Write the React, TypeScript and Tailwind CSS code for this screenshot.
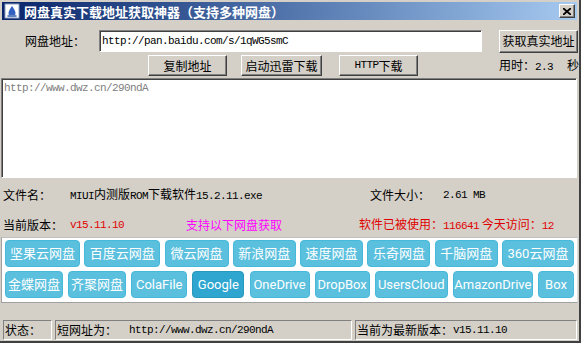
import React from "react";

const CJK = '"Noto Sans CJK SC", "Noto Sans", sans-serif';

const M = ({ children, className = "" }: { children: React.ReactNode; className?: string }) => (
  <span className={"font-['Liberation_Mono',monospace] text-[11px] tracking-[-0.6px] " + className}>{children}</span>
);

const raised =
  "border border-t-white border-l-white border-r-[#404040] border-b-[#404040] shadow-[inset_-1px_-1px_0_#808080] bg-[#d4d0c8] flex items-center justify-center";
const sunken =
  "border border-t-[#808080] border-l-[#808080] border-r-white border-b-white shadow-[inset_1px_1px_0_#404040]";
const panel = "border border-t-[#808080] border-l-[#808080] border-r-white border-b-white";

const row1 = [
  ["坚果云网盘", 75],
  ["百度云网盘", 76],
  ["微云网盘", 64],
  ["新浪网盘", 63],
  ["速度网盘", 63],
  ["乐奇网盘", 63],
  ["千脑网盘", 63],
  ["360云网盘", 72],
] as const;
const row2 = [
  ["金蝶网盘", 58],
  ["齐聚网盘", 58],
  ["ColaFile", 56],
  ["Google", 52],
  ["OneDrive", 60],
  ["DropBox", 55],
  ["UsersCloud", 73],
  ["AmazonDrive", 80],
  ["Box", 36],
] as const;

function Pill({ label, w, active }: { label: string; w: number; active?: boolean }) {
  return (
    <div
      style={{ width: w }}
      className={
        "h-[27px] rounded-[4px] border flex items-center justify-center text-white text-[13px] font-['Roboto','Noto_Sans_CJK_SC',sans-serif] " +
        (active ? "bg-[#2ea6cf] border-[#269abc]" : "bg-[#5bc0de] border-[#46b8da]")
      }
    >
      {label}
    </div>
  );
}

export default function App() {
  return (
    <div
      className="w-[581px] h-[343px] bg-[#d4d0c8] flex flex-col text-[12px] text-black border-r-2 border-b-2 border-r-[#404040] border-b-[#404040] overflow-hidden"
      style={{ fontFamily: CJK }}
    >
      {/* title bar */}
      <div className="mt-[2px] mx-[2px] h-[18px] bg-gradient-to-r from-[#0a246a] to-[#a6caf0] flex items-center pl-[2px] pr-[2px]">
        <svg width="16" height="16" viewBox="0 0 16 16" className="shrink-0">
          <rect x="1" y="1" width="14" height="14" fill="#fff" stroke="#8aa0c0" />
          <path d="M8 3 C6 6 4.5 8 4.5 10 A3.5 3.5 0 0 0 11.5 10 C11.5 8 10 6 8 3Z" fill="#3060c0" />
          <ellipse cx="8" cy="13" rx="5" ry="1.2" fill="#6080c0" />
        </svg>
        <span className="ml-[4px] text-white font-bold text-[13px] leading-none whitespace-nowrap">
          网盘真实下载地址获取神器（支持多种网盘）
        </span>
        <div className="flex-1" />
        <div className={raised + " w-[16px] h-[14px] text-[12px] font-bold leading-none"}>
          <svg width="8" height="7" viewBox="0 0 8 7">
            <path d="M0 0 L8 7 M8 0 L0 7" stroke="#000" strokeWidth="1.8" />
          </svg>
        </div>
      </div>

      {/* row 1 */}
      <div className="mt-[10px] h-[22px] flex items-center">
        <span className="ml-[25px] w-[74px]">网盘地址：</span>
        <div className={sunken + " bg-white w-[383px] h-[22px] flex items-center pl-[2px]"}>
          <M>http://pan.baidu.com/s/1qWG5smC</M>
        </div>
        <div className={raised + " ml-[17px] w-[79px] h-[23px]"}>获取真实地址</div>
      </div>

      {/* row 2 */}
      <div className="mt-[3px] h-[21px] flex items-center">
        <div className={raised + " ml-[148px] w-[79px] h-[21px]"}>复制地址</div>
        <div className={raised + " ml-[14px] w-[81px] h-[21px]"}>启动迅雷下载</div>
        <div className={raised + " ml-[17px] w-[79px] h-[21px]"}>
          <M>HTTP</M>下载
        </div>
        <span className="ml-[81px] whitespace-nowrap">
          用时：<M>2.3</M>
          <span className="ml-[14px]">秒</span>
        </span>
      </div>

      {/* text area */}
      <div className={sunken + " mt-[2px] ml-[1px] w-[576px] h-[100px] bg-white pl-[2px] leading-[14px]"}>
        <M className="text-[#808080]">http://www.dwz.cn/290ndA</M>
      </div>

      {/* file row */}
      <div className="mt-[2px] h-[30px] flex items-center">
        <span className="ml-[3px] w-[67px]">文件名：</span>
        <span className="w-[300px]">
          <M>MIUI</M>内测版<M>ROM</M>下载软件<M>15.2.11.exe</M>
        </span>
        <span className="w-[73px]">文件大小：</span>
        <M>2.61 MB</M>
      </div>

      {/* version row */}
      <div className="mt-[4px] h-[22px] flex items-center">
        <span className="ml-[3px] w-[67px]">当前版本：</span>
        <M className="text-[#e00000] w-[116px] inline-block">v15.11.10</M>
        <span className="text-[#ff00ff] w-[173px]">支持以下网盘获取</span>
        <span className="text-[#e00000] whitespace-nowrap">
          软件已被使用：<M>116641</M> 今天访问：<M>12</M>
        </span>
      </div>

      {/* network button panel */}
      <div className="mt-[1px] ml-[1px] w-[577px] h-[66px] bg-white border border-t-[#c0c0c0] border-l-[#a0a0a0] border-r-[#e0e0e0] border-b-[#a0a0a0] px-[3px] pt-[2px] flex flex-col gap-[4px]">
        <div className="flex justify-between">
          {row1.map(([l, w]) => (
            <Pill key={l} label={l} w={w} />
          ))}
        </div>
        <div className="flex justify-between">
          {row2.map(([l, w]) => (
            <Pill key={l} label={l} w={w} active={l === "Google"} />
          ))}
        </div>
      </div>

      {/* status bar */}
      <div className="mt-[17px] h-[20px] flex items-stretch gap-[3px] pl-[3px]">
        <div className={panel + " w-[49px] flex items-center pl-[1px]"}>状态：</div>
        <div className={panel + " w-[297px] flex items-center pl-[1px] whitespace-nowrap"}>
          短网址为：<M className="ml-[12px]">http://www.dwz.cn/290ndA</M>
        </div>
        <div className={panel + " w-[222px] flex items-center pl-[1px] whitespace-nowrap"}>
          当前为最新版本：<M>v15.11.10</M>
        </div>
      </div>
    </div>
  );
}
